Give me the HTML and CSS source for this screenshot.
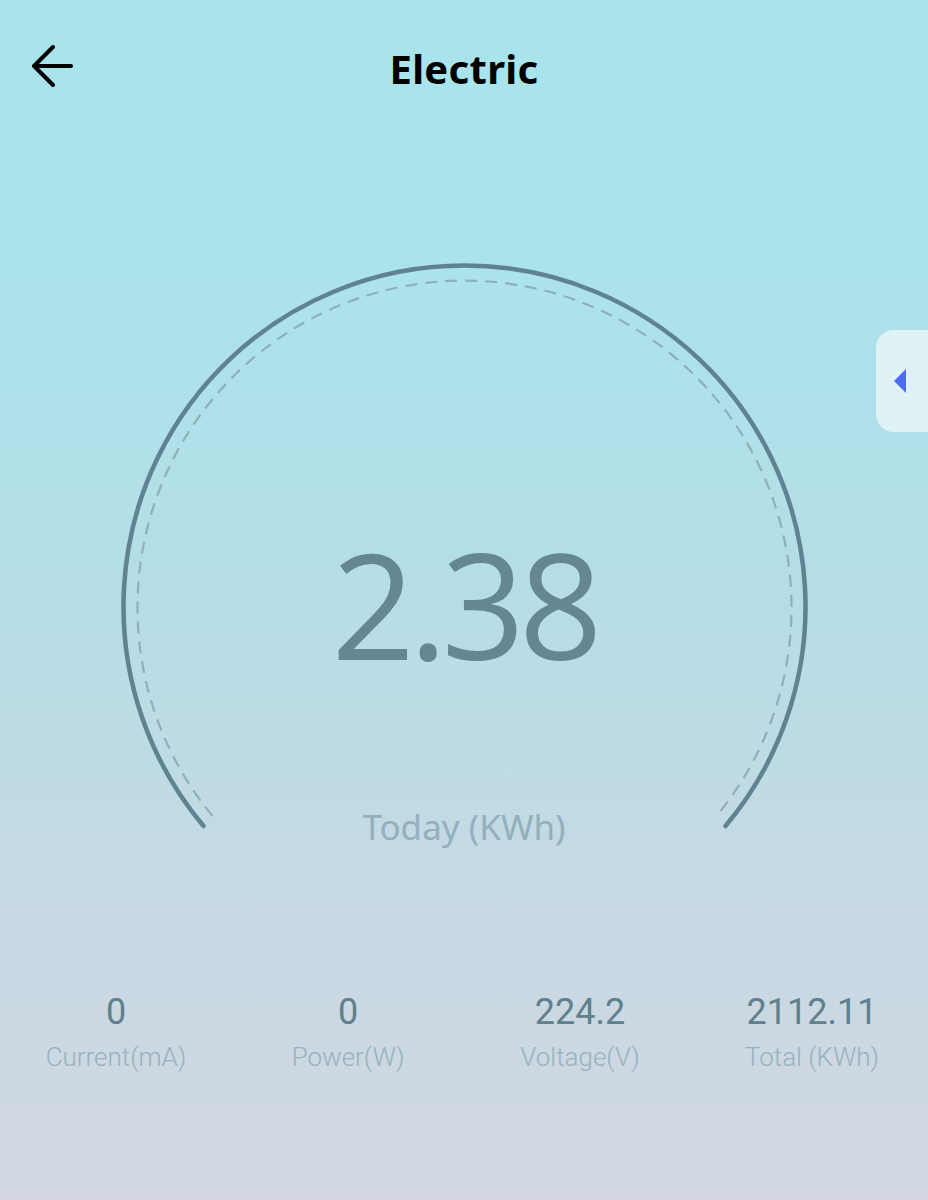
FILE: index.html
```html
<!DOCTYPE html>
<html lang="en">

<head>
    <meta charset="UTF-8">
    <meta name="viewport" content="width=device-width, initial-scale=1.0">
    <title>Electric</title>
    <link rel="stylesheet" href="styles.css">
</head>

<body>
    <div class="page">
        <header class="topbar">
            <button class="back" aria-label="Back">
                <svg width="44" height="44" viewBox="0 0 44 44">
                    <path d="M3 21 H40 M22 2 L3 21 L22 40" fill="none" stroke="#000" stroke-width="4"
                        stroke-linecap="round" stroke-linejoin="round" />
                </svg>
            </button>
            <h1>Electric</h1>
        </header>

        <div class="gauge">
            <svg class="dial" width="928" height="620" viewBox="0 0 928 620">
                <path d="M203.5 576 A341 341 0 1 1 725.5 576" fill="none" stroke="#5f8390" stroke-width="4.5"
                    stroke-linecap="round" />
                <path d="M212.5 566 A327 327 0 1 1 716.5 566" fill="none" stroke="#8fb0ba" stroke-width="2.2"
                    stroke-dasharray="12 8" />
            </svg>
            <div class="reading">
                <div class="value">2.38</div>
                <div class="unit">Today (KWh)</div>
            </div>
        </div>

        <div class="tab">
            <span class="arrow"></span>
        </div>

        <div class="stats">
            <div class="stat">
                <div class="num">0</div>
                <div class="label">Current(mA)</div>
            </div>
            <div class="stat">
                <div class="num">0</div>
                <div class="label">Power(W)</div>
            </div>
            <div class="stat">
                <div class="num">224.2</div>
                <div class="label">Voltage(V)</div>
            </div>
            <div class="stat">
                <div class="num">2112.11</div>
                <div class="label">Total (KWh)</div>
            </div>
        </div>
    </div>
</body>

</html>
```

FILE: styles.css
```css
* {
    margin: 0;
    padding: 0;
    box-sizing: border-box;
}

body {
    font-family: "Noto Sans", "Open Sans", sans-serif;
    background: linear-gradient(180deg, #a9e4ed 0px, #a9e4ed 200px, #b4dee7 560px, #c6d9e3 900px, #d2d7e2 1200px);
    min-height: 1200px;
}

.page {
    position: relative;
    width: 928px;
    height: 1200px;
}

.topbar {
    height: 140px;
    display: flex;
    align-items: center;
    justify-content: center;
    position: relative;
    padding-bottom: 4px;
}

.back {
    position: absolute;
    left: 31px;
    top: 45px;
    border: none;
    background: none;
    width: 44px;
    height: 44px;
}

.topbar h1 {
    font-size: 40px;
    font-weight: 700;
    color: #000;
    letter-spacing: 0.3px;
}

.gauge {
    position: relative;
    height: 620px;
    margin-top: 110px;
}

.dial {
    position: absolute;
    left: 0;
    top: 0;
}

.reading {
    position: absolute;
    left: 0;
    right: 0;
    top: 281px;
    display: flex;
    flex-direction: column;
    align-items: center;
}

.value {
    font-family: "Open Sans", sans-serif;
    font-size: 146px;
    line-height: 1;
    color: #658793;
    letter-spacing: -6px;
}

.unit {
    margin-top: 126px;
    font-size: 35px;
    color: #93b0bc;
}

.tab {
    position: absolute;
    right: 0;
    top: 330px;
    width: 52px;
    height: 102px;
    border-radius: 18px 0 0 18px;
    background-color: #dff3f7;
    display: flex;
    align-items: center;
    padding-left: 18px;
}

.arrow {
    width: 0;
    height: 0;
    border-top: 12px solid transparent;
    border-bottom: 12px solid transparent;
    border-right: 12px solid #4d6cf3;
}

.stats {
    display: grid;
    grid-template-columns: repeat(4, 1fr);
    margin-top: 121px;
}

.stat {
    display: flex;
    flex-direction: column;
    align-items: center;
    font-family: Roboto, sans-serif;
}

.num {
    font-size: 36px;
    color: #5f808c;
    line-height: 1.2;
}

.label {
    margin-top: 8px;
    font-size: 26px;
    font-weight: 300;
    color: #98b2be;
}
```
